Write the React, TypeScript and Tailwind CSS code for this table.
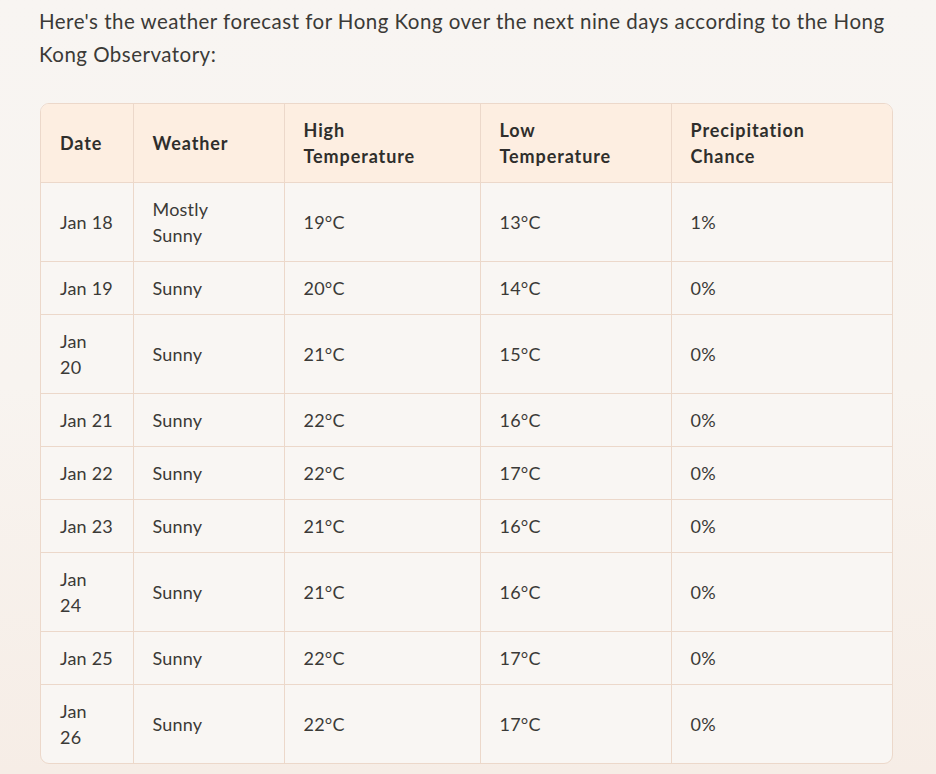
import React from 'react';

type Row = { date: React.ReactNode; weather: React.ReactNode; high: string; low: string; rain: string };

const rows: Row[] = [
  { date: 'Jan 18', weather: <>Mostly<br />Sunny</>, high: '19°C', low: '13°C', rain: '1%' },
  { date: 'Jan 19', weather: 'Sunny', high: '20°C', low: '14°C', rain: '0%' },
  { date: <>Jan<br />20</>, weather: 'Sunny', high: '21°C', low: '15°C', rain: '0%' },
  { date: 'Jan 21', weather: 'Sunny', high: '22°C', low: '16°C', rain: '0%' },
  { date: 'Jan 22', weather: 'Sunny', high: '22°C', low: '17°C', rain: '0%' },
  { date: 'Jan 23', weather: 'Sunny', high: '21°C', low: '16°C', rain: '0%' },
  { date: <>Jan<br />24</>, weather: 'Sunny', high: '21°C', low: '16°C', rain: '0%' },
  { date: 'Jan 25', weather: 'Sunny', high: '22°C', low: '17°C', rain: '0%' },
  { date: <>Jan<br />26</>, weather: 'Sunny', high: '22°C', low: '17°C', rain: '0%' },
];

const th = 'pl-[19px] pr-4 py-[13px] text-left align-middle font-bold tracking-[0.9px] border-r border-b border-[#ecd8ca] whitespace-nowrap';
const td = 'pl-[19px] pr-4 py-[13px] text-left align-middle tracking-[0.2px] border-r border-b border-[#ecd8ca] whitespace-nowrap';

export default function App() {
  return (
    <div className="min-h-[774px] w-full bg-gradient-to-b from-[#f8f5f2] via-[#f8f4f0] to-[#f6ede6] pl-[39px] pr-[40px] pt-[5px] text-[#3b3a37] font-['Lato','Liberation_Sans',sans-serif]">
      <p className="text-[20.5px] leading-[33px] tracking-[0.48px]">
        Here's the weather forecast for Hong Kong over the next nine days according to the Hong Kong Observatory:
      </p>

      <div className="mt-[32px] ml-[1px] w-[853px] overflow-hidden rounded-[9px] border border-[#ecd8ca] bg-[#f9f6f3]">
        <table className="w-full table-fixed border-collapse text-[18px] leading-[26px]">
          <colgroup>
            <col className="w-[92px]" />
            <col className="w-[151px]" />
            <col className="w-[196px]" />
            <col className="w-[191px]" />
            <col />
          </colgroup>
          <thead className="bg-[#fdeee1] text-[#2f2e2c]">
            <tr>
              <th className={th}>Date</th>
              <th className={th}>Weather</th>
              <th className={th}>High<br />Temperature</th>
              <th className={th}>Low<br />Temperature</th>
              <th className={`${th} border-r-0`}>Precipitation<br />Chance</th>
            </tr>
          </thead>
          <tbody>
            {rows.map((r, i) => {
              const last = i === rows.length - 1 ? 'border-b-0' : '';
              return (
                <tr key={i}>
                  <td className={`${td} ${last}`}>{r.date}</td>
                  <td className={`${td} ${last}`}>{r.weather}</td>
                  <td className={`${td} ${last}`}>{r.high}</td>
                  <td className={`${td} ${last}`}>{r.low}</td>
                  <td className={`${td} ${last} border-r-0`}>{r.rain}</td>
                </tr>
              );
            })}
          </tbody>
        </table>
      </div>
    </div>
  );
}
